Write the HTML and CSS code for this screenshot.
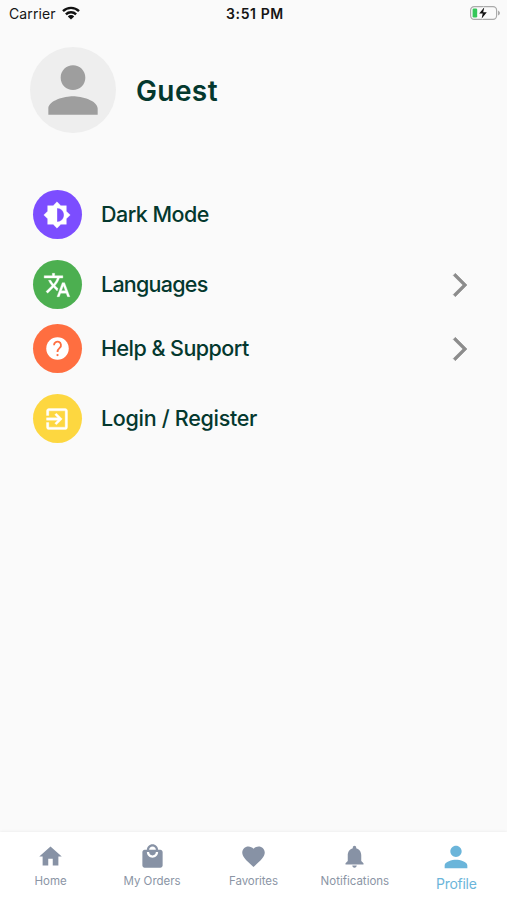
FILE: index.html
```html
<!DOCTYPE html>
<html lang="en">
<head>
<meta charset="utf-8">
<title>Profile</title>
<link rel="stylesheet" href="styles.css">
</head>
<body>
<header class="status">
  <div class="carrier"><span>Carrier</span>
    <svg class="wifi" viewBox="0 0 18 14"><g fill="none" stroke="#111" stroke-width="2.4"><path d="M1 5.2a11.4 11.4 0 0 1 16 0"/><path d="M3.9 8.3a7.2 7.2 0 0 1 10.2 0"/></g><path fill="#111" d="M9 13.6L5.8 10.4a4.5 4.5 0 0 1 6.4 0z"/></svg>
  </div>
  <div class="time">3:51 PM</div>
  <svg class="battery" viewBox="0 0 32 16"><rect x="1.6" y="1.6" width="26" height="12.8" rx="3.6" fill="none" stroke="#aaa" stroke-width="1.2"/><path d="M29 5.5q2 1 2 2.500t-2 2.500z" fill="#aaa"/><rect x="3.600" y="3.600" width="4.600" height="8.800" rx="1.200" fill="#35c759"/><path d="M15.300 2.200L10.200 8.600h3.500L12.600 13.800 17.800 7.300h-3.600z" fill="#111" stroke="#fafafa" stroke-width="2" paint-order="stroke"/></svg>
</header>
<section class="user">
  <div class="avatar"><svg viewBox="0 0 24 24"><path d="M12 12c2.210 0 4-1.790 4-4s-1.790-4-4-4-4 1.790-4 4 1.790 4 4 4zm0 2c-2.670 0-8 1.340-8 4v2h16v-2c0-2.660-5.330-4-8-4z"/></svg></div>
  <h1 class="name">Guest</h1>
</section>
<main class="menu">
  <div class="row tall">
    <div class="badge purple"><svg viewBox="0 0 24 24"><path d="M20 15.310L23.310 12 20 8.690V4h-4.690L12 .690 8.690 4H4v4.690L.690 12 4 15.310V20h4.690L12 23.310 15.310 20H20v-4.690zM12 18V6c3.310 0 6 2.690 6 6s-2.690 6-6 6z"/></svg></div>
    <span class="label dark">Dark Mode</span>
  </div>
  <div class="row">
    <div class="badge green"><svg viewBox="0 0 24 24"><path d="M12.870 15.070l-2.540-2.510.030-.030c1.740-1.940 2.980-4.170 3.710-6.530H17V4h-7V2H8v2H1v1.990h11.170C11.500 7.920 10.440 9.750 9 11.350 8.070 10.320 7.300 9.190 6.690 8h-2c.730 1.630 1.730 3.170 2.980 4.560l-5.090 5.020L4 19l5-5 3.110 3.110.760-2.040zM18.500 10h-2L12 22h2l1.120-3h4.750L21 22h2l-4.500-12zm-2.620 7l1.620-4.330L19.120 17h-3.240z"/></svg></div>
    <span class="label lang">Languages</span>
    <svg class="chevron" viewBox="0 0 24 24"><path d="M6.230 20.230L8 22l10-10L8 2 6.230 3.770 14.460 12z"/></svg>
  </div>
  <div class="row tall">
    <div class="badge orange"><svg viewBox="0 0 24 24"><circle cx="12" cy="12" r="10"/><path class="question" d="M8.900 9.100a3.100 3.100 0 1 1 5.200 2.200c-1.300 1.200-2.100 1.700-2.100 3.700"/><circle class="dot" cx="12" cy="17.800" r="1"/></svg></div>
    <span class="label help">Help &amp; Support</span>
    <svg class="chevron" viewBox="0 0 24 24"><path d="M6.230 20.230L8 22l10-10L8 2 6.230 3.770 14.460 12z"/></svg>
  </div>
  <div class="row">
    <div class="badge yellow"><svg viewBox="0 0 24 24"><path d="M10.090 15.590L11.500 17l5-5-5-5-1.410 1.410L12.670 11H3v2h9.670l-2.580 2.590zM19 3H5c-1.110 0-2 .900-2 2v4h2V5h14v14H5v-4H3v4c0 1.100.890 2 2 2h14c1.100 0 2-.900 2-2V5c0-1.100-.900-2-2-2z"/></svg></div>
    <span class="label login">Login / Register</span>
  </div>
</main>
<nav class="tabs">
  <div class="tab"><svg viewBox="0 0 24 24"><path d="M10 20v-6h4v6h5v-8h3L12 3 2 12h3v8z"/></svg><span class="t-home">Home</span></div>
  <div class="tab"><svg viewBox="0 0 24 24"><path d="M19 6h-2c0-2.760-2.240-5-5-5S7 3.240 7 6H5c-1.100 0-1.990.900-1.990 2L3 20c0 1.100.900 2 2 2h14c1.100 0 2-.900 2-2V8c0-1.100-.900-2-2-2zm-7-3c1.660 0 3 1.340 3 3H9c0-1.660 1.340-3 3-3zm0 10c-2.760 0-5-2.240-5-5h2c0 1.660 1.340 3 3 3s3-1.340 3-3h2c0 2.760-2.240 5-5 5z"/></svg><span class="t-orders">My Orders</span></div>
  <div class="tab"><svg viewBox="0 0 24 24"><path d="M12 21.350l-1.450-1.320C5.400 15.360 2 12.280 2 8.500 2 5.420 4.420 3 7.500 3c1.740 0 3.410.810 4.500 2.090C13.090 3.810 14.760 3 16.500 3 19.580 3 22 5.420 22 8.500c0 3.780-3.400 6.860-8.550 11.540L12 21.350z"/></svg><span class="t-fav">Favorites</span></div>
  <div class="tab"><svg viewBox="0 0 24 24"><path d="M12 22c1.100 0 2-.900 2-2h-4c0 1.100.890 2 2 2zm6-6v-5c0-3.070-1.640-5.640-4.500-6.320V4c0-.830-.670-1.500-1.500-1.500s-1.500.670-1.500 1.500v.680C7.630 5.360 6 7.920 6 11v5l-2 2v1h16v-1l-2-2z"/></svg><span class="t-notif">Notifications</span></div>
  <div class="tab active"><svg viewBox="0 0 24 24"><path d="M12 12c2.210 0 4-1.790 4-4s-1.790-4-4-4-4 1.790-4 4 1.790 4 4 4zm0 2c-2.670 0-8 1.340-8 4v2h16v-2c0-2.660-5.330-4-8-4z"/></svg><span class="t-profile">Profile</span></div>
</nav>
</body>
</html>
```
FILE: styles.css
```css
* { box-sizing: border-box; }
body {
  margin: 0;
  height: 900px;
  display: flex;
  flex-direction: column;
  overflow: hidden;
  background: #fafafa;
  font-family: Inter, "Liberation Sans", sans-serif;
}
svg { display: block; flex: none; }
.status {
  display: grid;
  grid-template-columns: 1fr auto 1fr;
  align-items: center;
  height: 26px;
  padding: 0 6px 0 9px;
  color: #151515;
}
.carrier { display: flex; align-items: center; gap: 6px; font-size: 14px; letter-spacing: 0.1px; }
.wifi { width: 18px; height: 14px; }
.time { font-size: 14px; font-weight: 600; letter-spacing: 0.6px; }
.battery { width: 32px; height: 16px; justify-self: end; }
.user { display: flex; align-items: center; gap: 20px; height: 86px; margin-top: 21px; padding-left: 30px; }
.avatar {
  display: grid;
  place-items: center;
  width: 86px;
  height: 86px;
  border-radius: 50%;
  background: #eee;
}
.avatar svg { width: 74px; height: 74px; fill: #9e9e9e; }
.name { margin: 0; padding-top: 2px; font-size: 28px; font-weight: 600; letter-spacing: 0.4px; color: #04382e; line-height: 36px; }
.menu { display: flex; flex-direction: column; margin-top: 57px; padding: 0 33px 0 32.500px; }
.row { display: flex; align-items: center; height: 49px; margin-bottom: 16px; }
.row.tall { margin-bottom: 21px; }
.row:nth-child(2) { margin-bottom: 15px; }
.badge {
  display: grid;
  place-items: center;
  width: 49px;
  height: 49px;
  margin-right: 19.500px;
  border-radius: 50%;
}
.badge svg { width: 28px; height: 28px; fill: #fff; }
.badge.orange svg { width: 27px; height: 27px; }
.badge.purple svg, .badge.green svg, .badge.yellow svg { stroke: #fff; stroke-width: 0.3; }
.purple { background: #7c4dff; }
.green { background: #4caf50; }
.orange { background: #ff6e40; }
.yellow { background: #fdd740; }
.badge svg .question { fill: none; stroke: #ff6e40; stroke-width: 1.6; }
.dot { fill: #ff6e40; }
.label { padding-bottom: 1px; font-size: 21.500px; line-height: 28px; font-weight: 500; color: #04382e; white-space: nowrap; }
.dark { letter-spacing: -0.55px; }
.lang { letter-spacing: -0.75px; }
.help { letter-spacing: -0.54px; }
.login { letter-spacing: -0.3px; }
.chevron { width: 28px; height: 28px; margin-left: auto; fill: #8c8c8c; stroke: #8c8c8c; stroke-width: 0.5; }
.tabs {
  display: grid;
  grid-template-columns: repeat(5, 1fr);
  height: 68px;
  margin-top: auto;
  background: #fff;
  box-shadow: 0 0 3px rgba(0, 0, 0, 0.08);
}
.tab { display: flex; flex-direction: column; align-items: center; padding-top: 11px; color: #8b95a5; }
.tab svg { width: 27px; height: 27px; fill: #8792a5; }
.tab span { margin-top: 4px; font-size: 11.500px; line-height: 14px; white-space: nowrap; }
.t-fav { letter-spacing: -0.1px; }
.tab.active { padding-top: 8px; color: #6bb5da; }
.tab.active svg { width: 34px; height: 34px; fill: #6bb5da; }
.tab.active span { margin-top: 1px; font-size: 14px; letter-spacing: -0.3px; line-height: 17px; }
```
